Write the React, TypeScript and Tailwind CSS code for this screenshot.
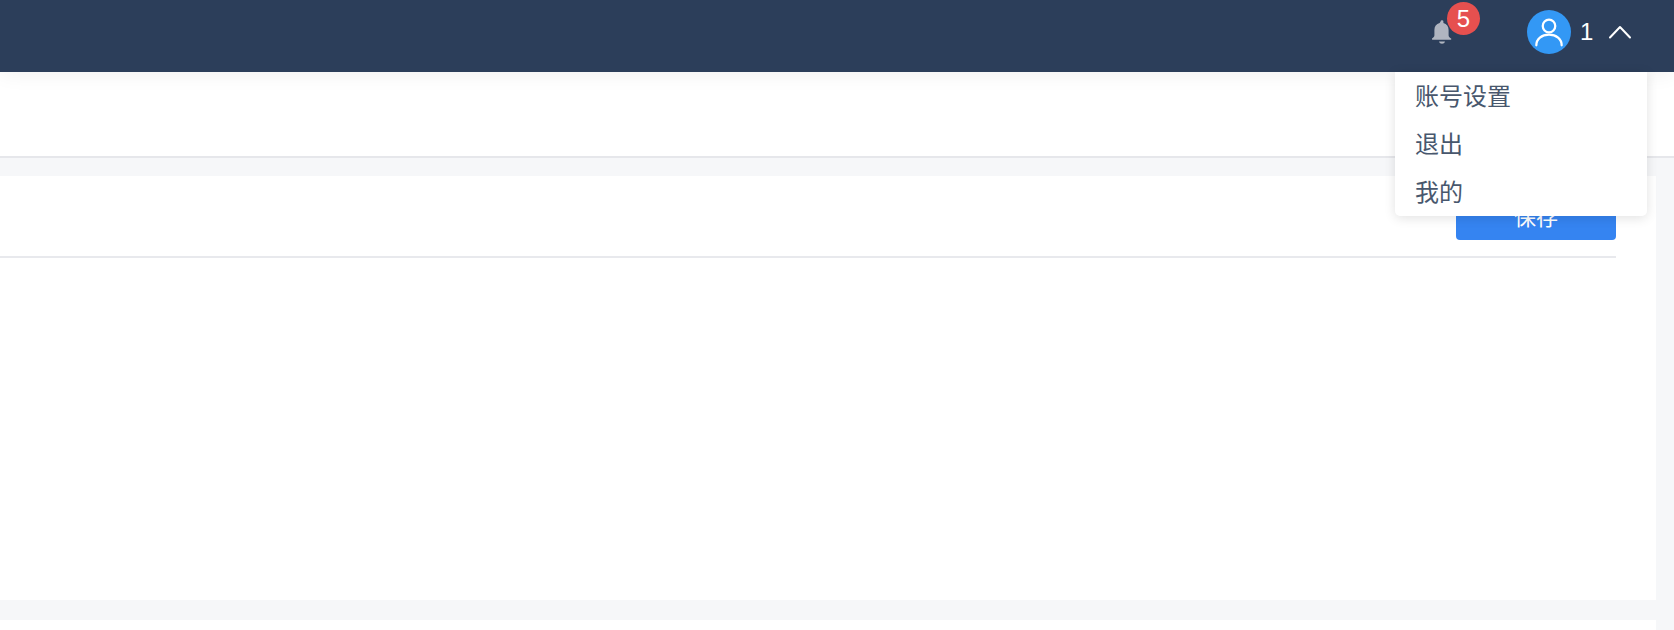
const App = () => {
  return (
    <div className="relative h-[630px] w-full overflow-hidden bg-[#f6f7f9] font-['Liberation_Sans','Noto_Sans_CJK_SC',sans-serif]">
      {/* top bar */}
      <div className="relative z-10 flex h-[72px] items-center justify-end bg-[#2c3e5a] pb-[8px] shadow-[0_2px_20px_rgba(0,0,0,0.06)]">
        <div className="relative mr-[75px] h-[24px] w-[20px]">
          <svg viewBox="0 0 20 24" className="h-[24px] w-[20px]" fill="#b0b5c0">
            <path d="M8.6 1.6a1.4 1.4 0 0 1 2.8 0v1.3c3.4.7 5.2 3.4 5.2 7v5.3c0 1.300.9 2.300 2.400 3.300.6.400.4 1.200-.4 1.200H.4c-.8 0-1-.8-.4-1.200 1.500-1 2.400-2 2.400-3.300V9.900c0-3.600 1.800-6.300 5.200-7z" />
            <path d="M7 21.600h6c-.4 1.400-1.600 2.200-3 2.200s-2.600-.8-3-2.200z" />
          </svg>
          <span className="absolute left-[15px] top-[-18px] flex h-[33px] w-[33px] items-center justify-center rounded-full bg-[#e6504f] text-[24px] leading-none text-white">
            5
          </span>
        </div>
        <div className="flex h-[44px] w-[44px] items-center justify-center rounded-full bg-[#3398f5]">
          <svg viewBox="0 0 24 24" className="h-[32px] w-[32px]" fill="none" stroke="#fff" strokeWidth="1.700" strokeLinecap="round">
            <circle cx="12" cy="7.500" r="4.700" />
            <path d="M2.500 22c0-4.800 4-8 9.500-8s9.500 3.200 9.500 8" />
          </svg>
        </div>
        <span className="ml-[9px] w-[12px] text-[24px] leading-none text-white">1</span>
        <svg viewBox="0 0 24 14" className="ml-[16px] mr-[42px] h-[14px] w-[24px]" fill="none" stroke="#fff" strokeWidth="2" strokeLinecap="round" strokeLinejoin="round">
          <path d="M2 12.500 12 2l10 10.500" />
        </svg>
      </div>

      {/* sub bar */}
      <div className="h-[86px] border-b-2 border-[#e6e7eb] bg-white" />

      {/* content */}
      <div className="pr-[18px] pt-[18px]">
        <div className="h-[424px] bg-white pr-[40px]">
          <div className="flex h-[82px] items-end justify-end border-b-2 border-[#e8e9ed] pb-[16px]">
            <button className="h-[40px] w-[160px] rounded-[4px] bg-[#3584f1] pb-[6px] text-[22px] text-white">保存</button>
          </div>
        </div>
        <div className="mt-[20px] h-[10px] bg-white" />
      </div>

      {/* dropdown */}
      <div className="absolute left-[1395px] top-[72px] z-20 flex w-[252px] flex-col rounded-b-[5px] bg-white py-0 shadow-[0_2px_12px_rgba(0,0,0,0.12)]">
        {["账号设置", "退出", "我的"].map((item) => (
          <div key={item} className="flex h-[48px] items-center px-[20px] pt-[2px] text-[24px] text-[#48576d]">
            {item}
          </div>
        ))}
      </div>
    </div>
  );
};

export default App;
